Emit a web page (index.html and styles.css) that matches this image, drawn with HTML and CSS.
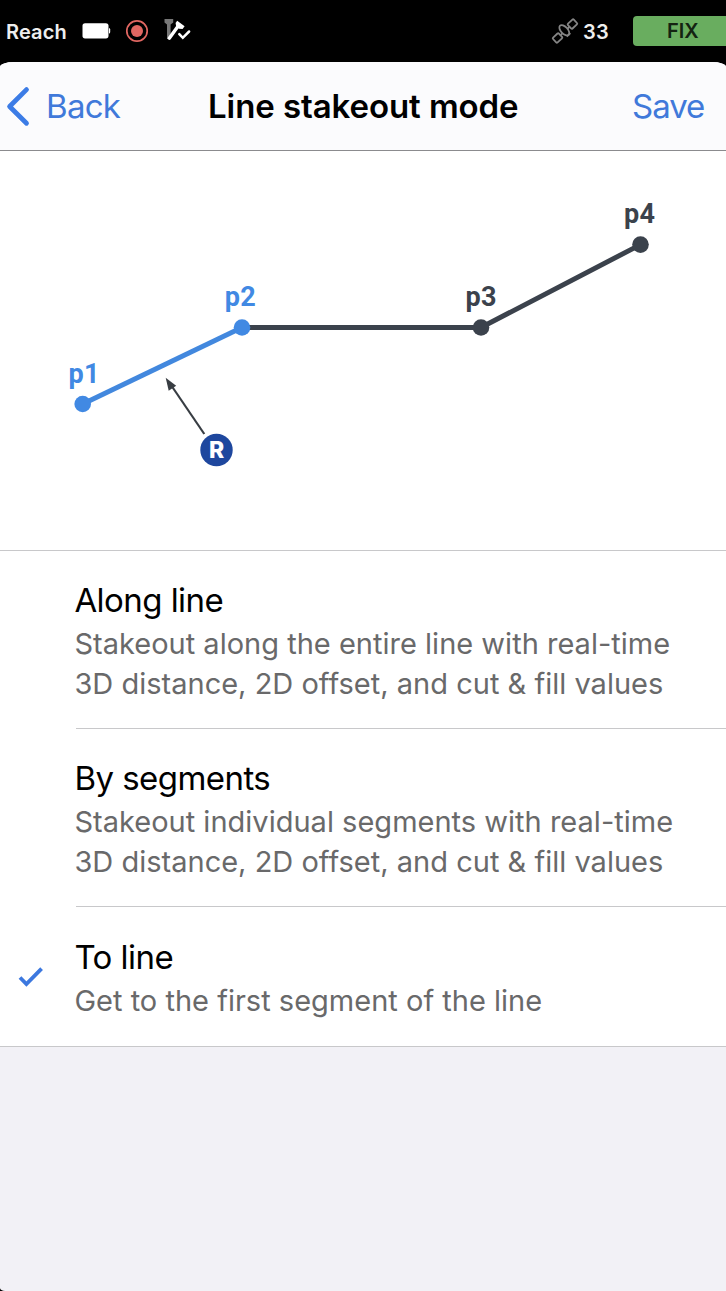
FILE: index.html
```html
<!DOCTYPE html>
<html lang="en">
<head>
<meta charset="utf-8">
<title>Line stakeout mode</title>
<link rel="stylesheet" href="styles.css">
</head>
<body>
<div class="screen">
  <div class="status">
    <span class="status-name">Reach</span>
    <svg class="battery" width="30" height="18" viewBox="0 0 30 18"><rect x="0.500" y="1.200" width="26" height="15.2" rx="2.6" fill="#fff"/><path d="M27 6q1.200 0 1.200 1.500v2.400q0 1.500-1.200 1.500z" fill="#fff"/></svg>
    <svg class="record" width="24" height="24" viewBox="0 0 24 24"><circle cx="12" cy="12" r="10.200" fill="none" stroke="#e26762" stroke-width="1.700"/><circle cx="12" cy="12" r="6" fill="#e26762"/></svg>
    <svg class="survey" width="28" height="24" viewBox="0 0 28 24"><path d="M0.500 1h8.700v3.500l-2.600 2v14.500h-3.600v-14.500l-2.500-2z" fill="#777"/><path d="M5.300 20.200L14 8.200" stroke="#fff" stroke-width="3.400" stroke-linecap="round" fill="none"/><path d="M13.200 2.800L20.600 8.300 18.600 10.900 15 10.800 12.200 8.600 11.600 5z" fill="#fff"/><path d="M15.300 16.200l3.500 3.600 6.300-6.300" fill="none" stroke="#fff" stroke-width="2.500" stroke-linecap="round"/></svg>
    <svg class="satellite" width="28" height="28" viewBox="0 0 28 28" fill="none" stroke="#858585" stroke-width="1.800"><g transform="translate(14 14) rotate(-43)"><rect x="-14.200" y="-3.300" width="8" height="6.600" rx="1"/><rect x="6.200" y="-3.300" width="8" height="6.600" rx="1"/><path d="M-6.200 0h2.600M3.600 0h2.600M-2.500 5.200h5"/><ellipse rx="3.400" ry="6.300" cy="-1"/></g></svg>
    <span class="sat-count">33</span>
    <span class="fix">FIX</span>
  </div>
  <div class="sheet">
    <div class="nav">
      <div class="back">
        <svg class="chevron" width="26" height="42" viewBox="0 0 26 42"><path d="M21.500 4.600L4.600 21.500 21.500 38.300" fill="none" stroke="#3c7ce6" stroke-width="4.800" stroke-linecap="round" stroke-linejoin="round"/></svg>
        <span class="back-label">Back</span>
      </div>
      <span class="title">Line stakeout mode</span>
      <span class="save">Save</span>
    </div>
    <svg class="diagram" width="726" height="399" viewBox="0 151 726 399">
      <g stroke-width="5" fill="none"><path d="M242 327.500H481L640.500 244.600" stroke="#3b424c"/><path d="M82.700 404L242 327.500" stroke="#4288de"/></g>
      <g fill="#3b424c"><circle cx="481" cy="327.500" r="8.300"/><circle cx="640.500" cy="244.600" r="8.300"/></g>
      <g fill="#4189e3"><circle cx="82.700" cy="404" r="8.300"/><circle cx="242" cy="327.500" r="8.300"/></g>
      <path d="M204.300 434L171 385" stroke="#383d43" stroke-width="2.200"/><path d="M165.700 377.800L176.200 385.800 168.700 390.800z" fill="#383d43"/>
      <circle cx="216.500" cy="450" r="16.200" fill="#1e479e"/>
      <text class="marker" x="216.500" y="458.300">R</text>
      <g class="point"><text class="active" x="68.500" y="382.600">p1</text><text class="active" x="224.800" y="305.800">p2</text><text x="465.500" y="305.800">p3</text><text x="624" y="222.500">p4</text></g>
    </svg>
    <div class="options">
      <div class="option">
        <div class="tick"></div>
        <div class="copy">
          <div class="name">Along line</div>
          <div class="desc">Stakeout along the entire line with real-time<br>3D distance, 2D offset, and cut &amp; fill values</div>
        </div>
      </div>
      <div class="option">
        <div class="tick"></div>
        <div class="copy">
          <div class="name">By segments</div>
          <div class="desc">Stakeout individual segments with real-time<br>3D distance, 2D offset, and cut &amp; fill values</div>
        </div>
      </div>
      <div class="option last">
        <div class="tick"><svg width="28" height="24" viewBox="0 0 28 24"><path d="M3 12.500L9.400 19 24.600 3.600" fill="none" stroke="#3c78df" stroke-width="3.800"/></svg></div>
        <div class="copy">
          <div class="name">To line</div>
          <div class="desc">Get to the first segment of the line</div>
        </div>
      </div>
    </div>
  </div>
</div>
</body>
</html>
```
FILE: styles.css
```css
* { box-sizing: border-box; }
body { margin: 0; background: #000; font-family: Inter, "Liberation Sans", sans-serif; font-optical-sizing: none; }
.screen { width: 726px; height: 1291px; display: flex; flex-direction: column; overflow: hidden; background: #000; }
.status { height: 62px; flex: none; display: flex; align-items: center; color: #eee; font-size: 20px; font-weight: 600; }
.status svg { flex: none; }
.status-name { width: 60px; margin-left: 6px; padding-top: 1px; letter-spacing: 0.15px; white-space: nowrap; }
.battery { margin-left: 16px; }
.record { margin-left: 13px; }
.survey { margin-left: 15px; margin-top: -3px; }
.satellite { margin-left: 359px; }
.sat-count { width: 27px; margin-left: 4px; padding-top: 1px; letter-spacing: 0.3px; }
.fix { width: 93px; height: 30px; flex: none; margin-left: auto; padding-left: 34px; line-height: 31px; border-radius: 4px 0 0 4px; background: #69ad5f; color: #142311; }
.sheet { flex: 1; display: flex; flex-direction: column; background: #f2f1f6; border-radius: 14px 14px 5px 0 / 5px 5px 4px 0; border-bottom-left-radius: 5px 3px; border-bottom-right-radius: 0; overflow: hidden; }
.nav { height: 89px; flex: none; display: flex; align-items: center; justify-content: space-between; background: #fbfbfd; border-bottom: 1px solid #8b8b8e; padding: 0 21px 0 5px; font-size: 33px; white-space: nowrap; }
.back { display: flex; align-items: center; gap: 15px; width: 203px; color: #4079da; letter-spacing: -0.7px; }
.title { width: 311px; font-weight: 600; letter-spacing: -0.08px; color: #000; }
.save { width: 73px; margin-left: auto; letter-spacing: -1px; color: #4079da; }
.diagram { display: block; flex: none; background: #fff; }
.point { font: 700 27px Roboto, sans-serif; fill: #3b424c; letter-spacing: 0.3px; }
.active { fill: #4189e3; }
.marker { font: 800 23px Inter, sans-serif; fill: #fff; text-anchor: middle; }
.options { background: #fff; border-top: 1px solid #c8c8ca; border-bottom: 1px solid #c8c8ca; }
.option { display: flex; height: 178px; }
.last { height: 139px; }
.tick { width: 76px; flex: none; display: flex; align-items: center; padding-left: 17px; }
.copy { flex: 1; padding-top: 28px; border-bottom: 1px solid #c8c8ca; white-space: nowrap; }
.last .copy { padding-top: 29px; border-bottom: 0; }
.name { margin-left: -1.6px; height: 45px; font-size: 33px; line-height: 43px; letter-spacing: -0.55px; color: #000; }
.desc { margin-left: -1.6px; font-size: 29px; line-height: 40px; letter-spacing: 0.01px; color: #69696a; }
```
